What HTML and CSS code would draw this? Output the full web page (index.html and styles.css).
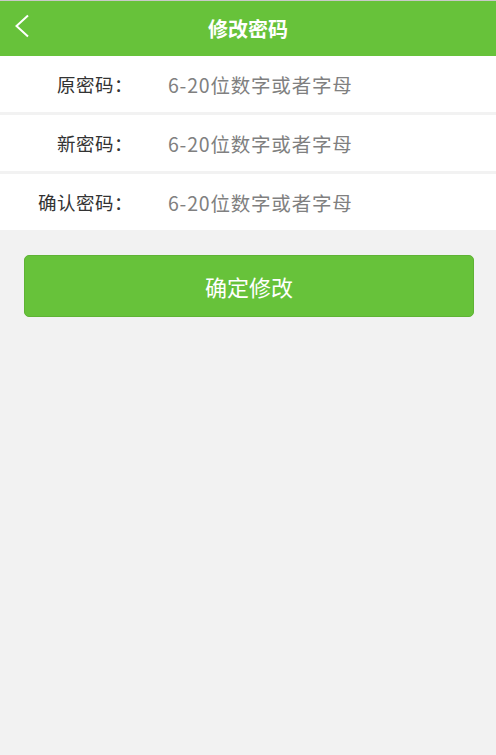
FILE: index.html
```html
<!DOCTYPE html>
<html lang="zh-CN">
<head>
  <meta charset="UTF-8">
  <title>修改密码</title>
  <meta name="viewport" content="width=device-width, initial-scale=1.0">
  <link rel="stylesheet" href="styles.css">
</head>
<body>

<header class="topbar">
  <a class="back" href="#">
    <svg width="16" height="24" viewBox="0 0 16 24">
      <path d="M14 1.5 L2.5 12 L14 22.5" fill="none" stroke="#fff" stroke-width="2"/>
    </svg>
  </a>
  <h1>修改密码</h1>
</header>

<div class="form">
  <div class="row">
    <label>原密码：</label>
    <input type="password" placeholder="6-20位数字或者字母">
  </div>
  <div class="row">
    <label>新密码：</label>
    <input type="password" placeholder="6-20位数字或者字母">
  </div>
  <div class="row">
    <label>确认密码：</label>
    <input type="password" placeholder="6-20位数字或者字母">
  </div>
</div>

<div class="actions">
  <button>确定修改</button>
</div>

</body>
</html>
```

FILE: styles.css
```css
body {
  font-family: "Noto Sans CJK SC", "Liberation Sans", sans-serif;
  background: #f2f2f2;
  margin: 0;
  padding: 0;
  border-top: 1px solid #c9c9c9;
}

.topbar {
  background: #67c23a;
  height: 55px;
  display: flex;
  align-items: center;
  justify-content: center;
  position: relative;
}

.topbar h1 {
  margin: 0;
  color: #fff;
  font-size: 20px;
  font-weight: bold;
}

.back {
  position: absolute;
  left: 14px;
  top: 13px;
  display: block;
}

.form {
  display: flex;
  flex-direction: column;
  gap: 3px;
}

.row {
  background: #fff;
  height: 56px;
  display: flex;
  align-items: center;
}

.row label {
  width: 133px;
  text-align: right;
  font-size: 18.5px;
  letter-spacing: 0.5px;
  color: #333;
}

.row input {
  border: none;
  outline: none;
  margin-left: 35px;
  font-family: inherit;
  font-size: 19.5px;
  letter-spacing: 0.8px;
  color: #333;
  width: 290px;
  padding: 0;
}

.row input::placeholder {
  color: #808080;
}

.actions {
  padding: 25px 22px 0 24px;
}

button {
  width: 100%;
  height: 62px;
  background: #67c23a;
  border: 1px solid #5fb335;
  border-radius: 5px;
  color: #fff;
  font-family: inherit;
  font-size: 22px;
}
```
